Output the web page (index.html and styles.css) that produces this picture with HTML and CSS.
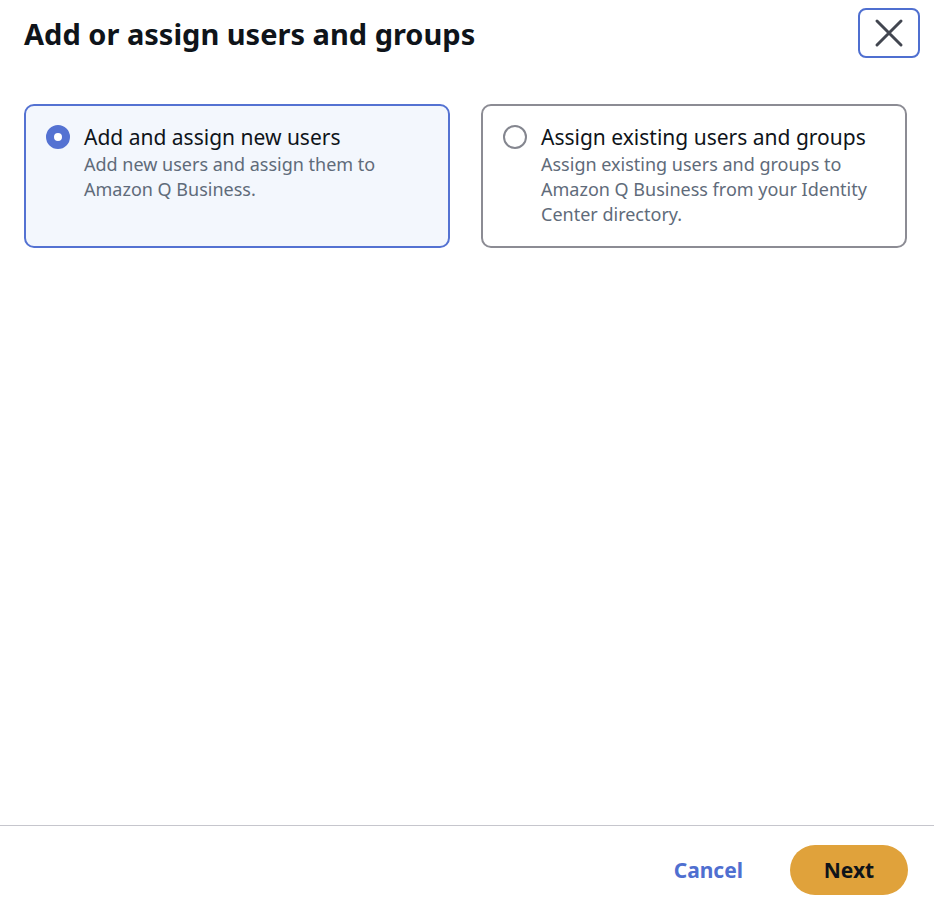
FILE: index.html
```html
<!DOCTYPE html>
<html lang="en">
<head>
<meta charset="utf-8">
<title>Add or assign users and groups</title>
<link rel="stylesheet" href="styles.css">
</head>
<body>
<div class="modal">
  <header class="modal-header">
    <h1 class="modal-title">Add or assign users and groups</h1>
    <button class="close-btn" aria-label="Close">
      <svg width="30" height="30" viewBox="0 0 30 30" aria-hidden="true">
        <path d="M3 3 L27 27 M27 3 L3 27" stroke="#424650" stroke-width="3" stroke-linecap="round" fill="none"/>
      </svg>
    </button>
  </header>
  <main class="modal-body">
    <div class="tiles">
      <label class="tile tile-selected">
        <span class="radio radio-checked"></span>
        <span class="tile-text">
          <span class="tile-label">Add and assign new users</span>
          <span class="tile-desc">Add new users and assign them to Amazon Q Business.</span>
        </span>
      </label>
      <label class="tile">
        <span class="radio"></span>
        <span class="tile-text">
          <span class="tile-label">Assign existing users and groups</span>
          <span class="tile-desc">Assign existing users and groups to Amazon Q Business from your Identity Center directory.</span>
        </span>
      </label>
    </div>
  </main>
  <footer class="modal-footer">
    <button class="btn-link">Cancel</button>
    <button class="btn-primary">Next</button>
  </footer>
</div>
</body>
</html>
```

FILE: styles.css
```css
html, body {
  margin: 0;
  padding: 0;
  background: #ffffff;
}
body {
  font-family: "Noto Sans", "Open Sans", Arial, sans-serif;
  color: #0f141a;
}
.modal {
  height: 910px;
  display: flex;
  flex-direction: column;
  box-sizing: border-box;
}
.modal-header {
  display: flex;
  justify-content: space-between;
  align-items: flex-start;
  padding: 8px 14px 0 24px;
  height: 96px;
  box-sizing: border-box;
}
.modal-title {
  margin: 0;
  font-size: 29px;
  font-weight: 700;
  line-height: 52px;
}
.close-btn {
  width: 62px;
  height: 50px;
  border: 2px solid #4f6fd0;
  border-radius: 8px;
  background: #fff;
  display: flex;
  align-items: center;
  justify-content: center;
  padding: 0;
  box-sizing: border-box;
}
.modal-body {
  flex: 1;
  padding: 8px 27px 0 24px;
}
.tiles {
  display: grid;
  grid-template-columns: 426px 426px;
  column-gap: 31px;
}
.tile {
  display: flex;
  gap: 14px;
  height: 144px;
  box-sizing: border-box;
  border: 2px solid #8c8c94;
  border-radius: 10px;
  padding: 16px 20px 0 20px;
  background: #ffffff;
}
.tile-selected {
  border-color: #5472d2;
  background: #f3f7fd;
}
.radio {
  flex: none;
  width: 24px;
  height: 24px;
  border: 2px solid #84868f;
  border-radius: 50%;
  box-sizing: border-box;
  background: #fff;
  margin-top: 3px;
}
.radio-checked {
  border: 8px solid #5472d2;
}
.tile-text {
  display: flex;
  flex-direction: column;
}
.tile-label {
  font-size: 21px;
  line-height: 30px;
  color: #0f141a;
}
.tile-desc {
  font-size: 18px;
  line-height: 25px;
  color: #5f6b7a;
}
.modal-footer {
  border-top: 1px solid #c6c6cd;
  height: 85px;
  box-sizing: border-box;
  display: flex;
  justify-content: flex-end;
  align-items: flex-start;
  padding: 19px 26px 0 0;
  gap: 47px;
}
.btn-link {
  background: none;
  border: none;
  font-family: inherit;
  font-size: 21px;
  font-weight: 700;
  color: #4f6fd0;
  padding: 0;
  height: 50px;
}
.btn-primary {
  width: 118px;
  height: 50px;
  border: none;
  border-radius: 25px;
  background: #e0a23b;
  font-family: inherit;
  font-size: 21px;
  font-weight: 700;
  color: #0f141a;
}
```
